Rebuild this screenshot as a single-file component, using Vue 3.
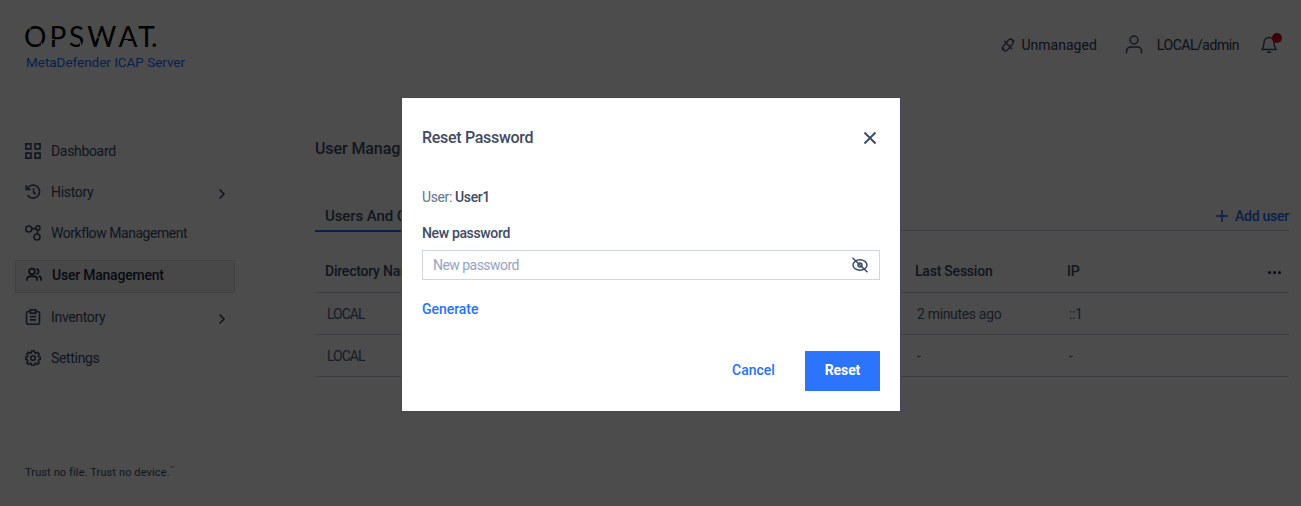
<script setup>
const nav = [
  { label: 'Dashboard', icon: 'grid', cls: 'dashboard' },
  { label: 'History', icon: 'history', cls: 'history', more: true },
  { label: 'Workflow Management', icon: 'flow', cls: 'workflow' },
  { label: 'User Management', icon: 'users', cls: 'active' },
  { label: 'Inventory', icon: 'clipboard', cls: 'inventory', more: true },
  { label: 'Settings', icon: 'gear', cls: 'settings' },
]
const rows = [
  { dir: 'LOCAL', last: '2 minutes ago', ip: '::1' },
  { dir: 'LOCAL', last: '-', ip: '-' },
]
</script>

<template>
  <div class="page">
    <header class="top">
      <div class="brand">
        <svg class="logo" width="136" height="26" viewBox="0 0 136 26">
          <text x="-1 24.500 44 62.300 93.500 113.300 126" y="22.500">OPSWAT.</text>
          <path class="cuts" d="M5 2v4M16.500 18.500v4M25 15.500h4.500M55.500 18v5M71 12l4 2M99 16.500l4 0" />
        </svg>
        <div class="product">MetaDefender ICAP Server</div>
      </div>
      <div class="status">
        <svg class="plug" width="14" height="14" viewBox="0 0 14 14" fill="none" stroke="currentColor" stroke-width="1.35" stroke-linecap="round">
          <path d="M5.600 4.200l2-2.200a2.700 2.700 0 0 1 4 3.900L9.700 8M8.400 9.900l-2 2.100a2.700 2.700 0 0 1-4-3.900L4.300 6M3.600 3.200l7 7.600M1.200 11.300l1.500-.8M12.800 2.700l-1.500.8" />
        </svg>
        <span class="unmanaged">Unmanaged</span>
        <svg class="person" width="18" height="20" viewBox="0 0 18 20" fill="none" stroke="currentColor" stroke-width="1.5">
          <circle cx="9" cy="5" r="3.9" /><path d="M1.500 18.500v-2.400a4 4 0 0 1 4-4h7a4 4 0 0 1 4 4v2.400" />
        </svg>
        <span class="account">LOCAL/admin</span>
        <span class="bell">
          <svg width="16" height="18" viewBox="0 0 16 18" fill="none" stroke="currentColor" stroke-width="1.400" stroke-linejoin="round">
            <path d="M8 1.500a5 5 0 0 0-5 5c0 4-1 5-2.200 7h14.400C14 11.500 13 10.500 13 6.500a5 5 0 0 0-5-5zM6 16.300h4" />
          </svg>
          <i class="badge"></i>
        </span>
      </div>
    </header>

    <div class="body">
      <aside class="side">
        <nav>
          <a v-for="n in nav" :key="n.label" class="item" :class="n.cls">
            <svg v-if="n.icon === 'grid'" class="ic" viewBox="0 0 16 16"><path d="M.9.900h5v5h-5zM10.100.900h5v5h-5zM.9 10.100h5v5h-5zM10.100 10.100h5v5h-5z" /></svg>
            <svg v-else-if="n.icon === 'history'" class="ic" viewBox="0 0 16 16"><path d="M2.200 4.800A6.500 6.500 0 1 1 2.400 10.800M1.300 1.200v4.200h4.300M8.600 4.300v4.200l2.300 1.700" /></svg>
            <svg v-else-if="n.icon === 'flow'" class="ic" viewBox="0 0 16 16"><circle cx="3.800" cy="4" r="3" /><circle cx="13" cy="2.900" r="2" /><circle cx="12" cy="12" r="3" /><path d="M6.800 3.600h4.200M12.800 5l-.5 4" /></svg>
            <svg v-else-if="n.icon === 'users'" class="ic" viewBox="0 0 16 16"><circle cx="6" cy="4.500" r="2.900" /><path d="M.9 13.800v-1.600a2.800 2.800 0 0 1 2.800-2.800h4.600a2.800 2.800 0 0 1 2.800 2.800v1.600M10.400 1.700a2.900 2.900 0 0 1 0 5.600M12.500 9.400a2.800 2.800 0 0 1 2.600 2.800v1.600" /></svg>
            <svg v-else-if="n.icon === 'clipboard'" class="ic" viewBox="0 0 16 16"><path d="M5 2.500H3.200a1.700 1.700 0 0 0-1.700 1.700v9.300a1.700 1.700 0 0 0 1.700 1.700h9.600a1.700 1.700 0 0 0 1.700-1.700V4.200a1.700 1.700 0 0 0-1.700-1.700H11M5.200.900h5.600v3.200H5.200zM5 7.600h6M5 10.900h6" /></svg>
            <svg v-else class="ic" viewBox="0 0 16 16"><circle cx="8" cy="8" r="2.300" /><path d="M6.800.900h2.400l.5 1.900 1.100.5 1.700-1 1.700 1.700-1 1.700.5 1.100 1.900.5v1.900l-1.900.5-.5 1.100 1 1.700-1.700 1.700-1.700-1-1.100.5-.5 1.900H6.800l-.5-1.900-1.100-.5-1.700 1-1.700-1.700 1-1.700-.5-1.100-1.900-.5V7.300l1.900-.5.5-1.100-1-1.700 1.700-1.700 1.700 1 1.100-.5z" /></svg>
            <span class="label">{{ n.label }}</span>
            <svg v-if="n.more" class="chev" width="8" height="12" viewBox="0 0 8 12"><path d="M1.500 1.500L6 6l-4.500 4.500" /></svg>
          </a>
        </nav>
        <p class="tagline">Trust no file. Trust no device.<sup>™</sup></p>
      </aside>

      <main class="main">
        <h1>User Management</h1>
        <div class="tabs">
          <div class="tab">Users And Groups</div>
          <a class="add">
            <svg width="12" height="12" viewBox="0 0 12 12"><path d="M6 0v12M0 6h12" /></svg>
            <span>Add user</span>
          </a>
        </div>
        <div class="row head">
          <span>Directory Name</span><span>Last Session</span><span>IP</span>
          <span class="dots"><i></i><i></i><i></i></span>
        </div>
        <div v-for="(r, i) in rows" :key="i" class="row">
          <span class="c-dir">{{ r.dir }}</span><span>{{ r.last }}</span><span>{{ r.ip }}</span>
        </div>
      </main>
    </div>

    <div class="overlay">
      <section class="modal">
        <div class="m-head">
          <h2>Reset Password</h2>
          <svg width="14" height="14" viewBox="0 0 14 14" fill="none" stroke="currentColor" stroke-width="1.9"><path d="M1.500 1.500l11 11M12.500 1.500l-11 11" /></svg>
        </div>
        <p class="who"><span>User: </span><b>User1</b></p>
        <label>New password</label>
        <div class="field">
          <span>New password</span>
          <svg width="18" height="16" viewBox="0 0 18 16" fill="none" stroke="currentColor" stroke-width="1.500">
            <ellipse cx="9" cy="8" rx="7" ry="5.200" /><circle cx="9" cy="8" r="2" /><path d="M1.500.8l15 14.400" />
          </svg>
        </div>
        <a class="generate">Generate</a>
        <div class="actions">
          <button class="cancel">Cancel</button>
          <button class="reset">Reset</button>
        </div>
      </section>
    </div>
  </div>
</template>

<style>
body { background: #fff; }
</style>

<style scoped>
.page { position: relative; box-sizing: border-box; height: 506px; overflow: hidden; font: 400 14px/20px Roboto, "Liberation Sans", sans-serif; letter-spacing: -.33px; color: #3d4a68; background: #fff; }
.page * { box-sizing: border-box; }
.top { height: 98px; padding: 24px 19px 0 25px; display: flex; justify-content: space-between; }
.logo { display: block; overflow: visible; font: 400 28px Lato, sans-serif; letter-spacing: 0; fill: #000; }
.cuts { fill: none; stroke: #fff; stroke-width: 1.2; }
.product { margin: 2px 0 0 1px; color: #1d6bfc; font-size: 13.5px; letter-spacing: -.03px; white-space: nowrap; }
.status { display: flex; align-items: center; height: 42px; }
.plug { margin-right: 6px; }
.unmanaged, .account { color: #2b3750; }
.unmanaged { letter-spacing: .02px; }
.account { letter-spacing: -.46px; }
.person { margin: 0 14px 0 28px; }
.bell { position: relative; width: 21px; height: 18px; margin-left: 22px; }
.bell svg { display: block; }
.badge { position: absolute; left: 11px; top: -3px; width: 10px; height: 10px; border-radius: 50%; background: #d0021b; }
.body { display: flex; height: 408px; }
.side { width: 315px; display: flex; flex-direction: column; padding: 36px 80px 0 15px; }
.item { display: flex; align-items: center; height: 33px; margin-bottom: 8px; padding: 0 10px; }
.item.workflow { margin-bottom: 11px; }
.item.active { padding: 0 10px 3px; margin-bottom: 7px; border: 1px solid #dedee2; background: #f2f2f4; color: #1b273c; font-weight: 500; letter-spacing: -.22px; }
.item.workflow .label { letter-spacing: -.45px; }
.ic { width: 16px; height: 16px; fill: none; stroke: currentColor; stroke-width: 1.6; margin-right: 10px; }
.label { flex: 1; white-space: nowrap; }
.chev { fill: none; stroke: currentColor; stroke-width: 1.7; margin: 4px -1px 0 0; }
.tagline { margin: auto 0 23px 10px; font-size: 11px; letter-spacing: .12px; white-space: nowrap; }
.tagline sup { font-size: 7px; line-height: 0; }
.main { flex: 1; padding: 39px 12px 0 0; }
h1, h2 { margin: 0; font-size: 16px; font-weight: 500; line-height: 24px; letter-spacing: -.3px; }
h1 { letter-spacing: -.1px; }
.tabs { height: 33px; margin-top: 37px; border-bottom: 1px solid #c9ccd6; display: flex; justify-content: space-between; }
.tab { height: 34px; padding: 8px 10px 0; border-bottom: 2px solid #1d6bfc; font-size: 15px; font-weight: 500; letter-spacing: -.1px; }
.add { display: flex; align-items: center; gap: 7px; height: 38px; margin-top: -1px; color: #1d6bfc; font-weight: 500; letter-spacing: -.25px; }
.add svg { stroke: currentColor; stroke-width: 1.6; }
.row { display: grid; grid-template-columns: 590px 152px 1fr auto; align-items: center; height: 42px; padding: 0 8px 0 12px; border-bottom: 1px solid #c9ccda; color: #525e7a; }
.row.head { height: 62px; padding: 19px 8px 0 10px; font-weight: 500; color: #3d4a68; letter-spacing: -.22px; }
.c-dir { letter-spacing: -1px; }
.dots { display: flex; gap: 2px; margin-top: 2px; }
.dots i { width: 3px; height: 3px; border-radius: 50%; background: #1b273c; }
.overlay { position: absolute; inset: 0; background: rgba(0, 0, 0, .7); display: flex; justify-content: center; align-items: flex-start; padding: 98px 0 0 1px; }
.modal { width: 498px; height: 313px; background: #fff; padding: 28px 20px 20px; box-shadow: 0 0 0 1px #414661; display: flex; flex-direction: column; align-items: stretch; }
.m-head { display: flex; justify-content: space-between; align-items: center; height: 24px; padding-right: 3px; }
.who { margin: 37px 0 0; height: 20px; color: #66718c; line-height: 21px; letter-spacing: -.38px; }
.who b { font-weight: 500; color: #3d4a68; }
label { margin-top: 16px; font-weight: 500; letter-spacing: -.35px; }
.field { height: 30px; margin-top: 7px; border: 1px solid #cfd5e5; padding: 0 10px; display: flex; justify-content: space-between; align-items: center; color: #93a3c5; letter-spacing: -.54px; }
.field svg { color: #3d4a68; }
.generate { margin-top: 19px; color: #2672fb; font-weight: 500; letter-spacing: -.05px; }
.actions { margin-top: auto; display: flex; justify-content: flex-end; }
button { border: 0; height: 40px; padding: 0 0 2px; font: 500 14px/20px Roboto, sans-serif; background: none; color: #2672fb; width: 75px; letter-spacing: 0; }
.cancel { margin-right: 14px; }
.reset { background: #2c74fb; color: #fff; font-weight: 700; letter-spacing: -.1px; }
</style>
